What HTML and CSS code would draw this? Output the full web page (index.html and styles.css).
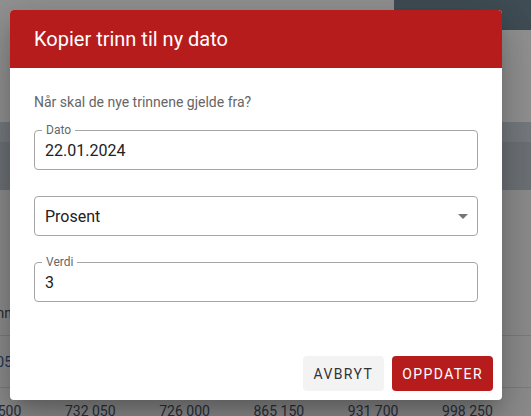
FILE: index.html
```html
<!DOCTYPE html>
<html lang="no">
<head>
<meta charset="utf-8">
<title>Kopier trinn til ny dato</title>
<link rel="stylesheet" href="styles.css">
</head>
<body>
<div class="page">
  <div class="topbar">
    <div class="topbar-fill"></div>
    <div class="topbar-box"></div>
  </div>
  <div class="gap-top"></div>
  <div class="band">
    <div class="band-top"></div>
    <div class="band-bottom"></div>
  </div>
  <div class="table">
    <div class="row head-row"><span class="cell-left">Trinn</span></div>
    <div class="row data-row"><span class="cell-left link">105</span></div>
    <div class="row num-row">
      <span class="num">642 500</span>
      <span class="num">732 050</span>
      <span class="num">726 000</span>
      <span class="num">865 150</span>
      <span class="num">931 700</span>
      <span class="num">998 250</span>
    </div>
  </div>
</div>

<div class="dialog" role="dialog" aria-labelledby="dlg-title">
  <div class="dialog-header">
    <h2 id="dlg-title" class="dialog-title">Kopier trinn til ny dato</h2>
  </div>
  <div class="dialog-content">
    <p class="intro">Når skal de nye trinnene gjelde fra?</p>
    <div class="field">
      <span class="field-label">Dato</span>
      <span class="field-value">22.01.2024</span>
    </div>
    <div class="field select">
      <span class="field-value">Prosent</span>
      <svg class="arrow" width="24" height="24" viewBox="0 0 24 24"><path d="M7 10l5 5 5-5z"/></svg>
    </div>
    <div class="field">
      <span class="field-label">Verdi</span>
      <span class="field-value">3</span>
    </div>
  </div>
  <div class="dialog-actions">
    <button class="btn btn-cancel">Avbryt</button>
    <button class="btn btn-primary">Oppdater</button>
  </div>
</div>
</body>
</html>
```
FILE: styles.css
```css
* { box-sizing: border-box; }
html, body { margin: 0; padding: 0; }
body {
  width: 531px;
  height: 416px;
  overflow: hidden;
  background: #8e8e8e;
  font-family: Roboto, "Liberation Sans", Arial, sans-serif;
  position: relative;
}
.page { display: flex; flex-direction: column; }
.topbar { display: flex; height: 30px; }
.topbar-fill { flex: 1; background: #929292; }
.topbar-box { width: 137px; background: #3f4d55; }
.gap-top { height: 92px; background: #929292; }
.band { display: flex; flex-direction: column; }
.band-top { height: 20px; background: #767b7f; }
.band-bottom { height: 48px; background: #6d7276; }
.table { display: flex; flex-direction: column; background: #8d8d8d; }
.row { display: flex; align-items: center; font-size: 14px; }
.head-row { height: 145px; padding-top: 100px; color: #2b2b2b; }
.data-row { height: 53px; border-top: 1px solid #7d7d7d; border-bottom: 1px solid #7d7d7d; }
.cell-left { margin-left: -28px; width: 40px; text-align: right; }
.link { color: #1e3450; }
.num-row { height: 40px; margin-left: -73px; align-items: flex-start; padding-top: 15px; }
.num { width: 94.3px; flex: none; text-align: right; color: #27313d; font-size: 14px; }

.dialog {
  position: absolute;
  left: 10px;
  top: 10px;
  width: 492px;
  height: 390px;
  background: #fff;
  border-radius: 4px;
  overflow: hidden;
  display: flex;
  flex-direction: column;
  box-shadow: 0 11px 15px -7px rgba(0,0,0,.2), 0 24px 38px 3px rgba(0,0,0,.14), 0 9px 46px 8px rgba(0,0,0,.12);
}
.dialog-header {
  height: 58px;
  background: #b71c1c;
  padding: 0 24px;
  display: flex;
  align-items: center;
}
.dialog-title {
  margin: 0;
  font-size: 20px;
  font-weight: 400;
  color: #fff;
  line-height: 32px;
}
.dialog-content {
  flex: 1;
  padding: 22px 24px 0;
  display: flex;
  flex-direction: column;
  gap: 26px;
}
.intro {
  margin: 0 0 -10px;
  font-size: 14px;
  line-height: 24px;
  color: #666;
}
.field {
  position: relative;
  height: 40px;
  border: 1px solid #a6a6a6;
  border-radius: 4px;
  display: flex;
  align-items: center;
  padding: 0 10px;
}
.field-label {
  position: absolute;
  left: 7px;
  top: -9px;
  padding: 0 4px;
  background: #fff;
  font-size: 12px;
  line-height: 16px;
  color: #666;
}
.field-value {
  font-size: 16px;
  color: #222;
  flex: 1;
}
.arrow { fill: #757575; margin-right: -8px; }
.dialog-actions {
  display: flex;
  justify-content: flex-end;
  gap: 8px;
  padding: 0 9px 9px;
}
.btn {
  height: 35px;
  border: none;
  border-radius: 4px;
  padding: 0 10px;
  font-family: Roboto, "Liberation Sans", Arial, sans-serif;
  font-size: 14px;
  letter-spacing: 1.4px;
  text-transform: uppercase;
}
.btn-cancel { background: #f3f3f3; color: #333; padding: 0 11px; }
.btn-primary { background: #b71c1c; color: #fff; }
```
